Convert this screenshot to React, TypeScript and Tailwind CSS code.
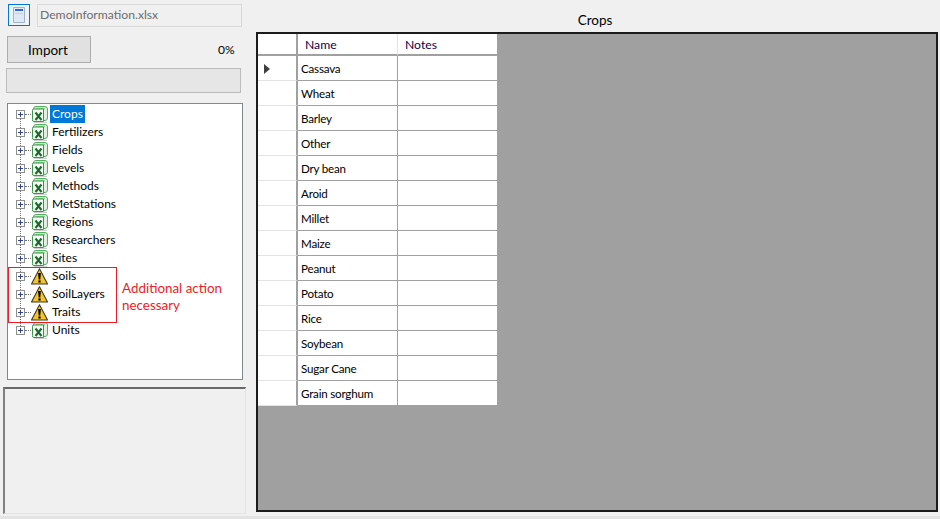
import React from 'react';

const SHEETS = [
  { name: 'Crops', warn: false },
  { name: 'Fertilizers', warn: false },
  { name: 'Fields', warn: false },
  { name: 'Levels', warn: false },
  { name: 'Methods', warn: false },
  { name: 'MetStations', warn: false },
  { name: 'Regions', warn: false },
  { name: 'Researchers', warn: false },
  { name: 'Sites', warn: false },
  { name: 'Soils', warn: true },
  { name: 'SoilLayers', warn: true },
  { name: 'Traits', warn: true },
  { name: 'Units', warn: false },
];

const CROPS = [
  'Cassava', 'Wheat', 'Barley', 'Other', 'Dry bean', 'Aroid', 'Millet',
  'Maize', 'Peanut', 'Potato', 'Rice', 'Soybean', 'Sugar Cane', 'Grain sorghum',
];

function ExcelIcon() {
  return (
    <svg width="17" height="17" viewBox="0 0 17 17" className="shrink-0">
      <rect x="2.5" y="0.5" width="14" height="14" rx="2.5" fill="#dff0df" stroke="#55ad60" />
      <path d="M5 2.5h9" stroke="#8fd096" strokeWidth="1.5" />
      <path d="M1.5 4.5Q1 3 3 3h9.5v12.5H3q-2 0-1.5-2z" fill="#f7fbf7" stroke="#3c9649" />
      <path d="M4.5 6.5l6 7.5M10.5 6.5l-6 7.5" stroke="#1c6a2c" strokeWidth="2.1" />
      <path d="M3 16.5h13" stroke="#cfcfcf" strokeWidth="1" />
    </svg>
  );
}

function WarnIcon() {
  return (
    <svg width="17" height="17" viewBox="0 0 17 17" className="shrink-0">
      <path d="M8.5 0.8L16.5 16H0.5Z" fill="#f4c430" stroke="#3f3714" strokeWidth="1.1" strokeLinejoin="round" />
      <path d="M7.1 5h2.8l-.6 6.4H7.7Z" fill="#000" />
      <rect x="7.4" y="12.4" width="2.2" height="2.2" fill="#000" />
    </svg>
  );
}

function Expander() {
  return (
    <div className="w-[9px] h-[9px] border border-[#8e8f8f] bg-white flex items-center justify-center shrink-0 z-10">
      <svg width="7" height="7" viewBox="0 0 7 7">
        <path d="M1 3.5h5M3.5 1v5" stroke="#33448c" strokeWidth="1" />
      </svg>
    </div>
  );
}

function TreeRow({ name, warn, selected, last }: { name: string; warn: boolean; selected: boolean; last: boolean }) {
  return (
    <div className="relative flex items-center h-[18px] pl-[8px]">
      {/* dotted connector to the next row */}
      {!last && <div className="absolute left-[12px] top-[9px] h-[18px] border-l border-dotted border-[#707070]" />}
      <Expander />
      <div className="w-[6px] border-t border-dotted border-[#707070] shrink-0" />
      {warn ? <WarnIcon /> : <ExcelIcon />}
      <span className={`ml-[2px] px-[2px] w-[fit-content] h-[18px] leading-[18px] ${selected ? 'bg-[#0078d7] text-white' : 'text-black'}`}>
        {name}
      </span>
    </div>
  );
}

function LeftPanel() {
  return (
    <div className="w-[246px] shrink-0 flex flex-col">
      <div className="flex items-start pt-[4px] pl-[8px]">
        <button className="w-[22px] h-[22px] border border-[#0078d7] bg-[#eef3f8] flex items-center justify-center">
          <svg width="14" height="16" viewBox="0 0 14 16">
            <path d="M1.5 0.5h11v15h-11z" fill="#dfe9f5" stroke="#9fb2c9" />
            <rect x="3" y="2" width="8" height="2" fill="#3b66c4" />
            <path d="M3 6.5h8" stroke="#c3d2e4" />
          </svg>
        </button>
        <div className="ml-[7px] w-[205px] h-[23px] border border-[#d9d9d9] bg-[#f0f0f0] text-[#6d6d6d] leading-[20px] pl-[2px] text-[12.2px]">
          DemoInformation.xlsx
        </div>
      </div>
      <div className="flex items-center mt-[9px] pl-[7px]">
        <button className="w-[84px] h-[27px] border border-[#adadad] bg-[#e1e1e1] text-[13.5px] pt-[1px] pr-[2px] text-black">Import</button>
        <span className="ml-[127px] text-[12px] text-black">0%</span>
      </div>
      <div className="ml-[6px] mt-[5px] w-[235px] h-[25px] border border-[#bcbcbc] bg-[#e6e6e6]" />
      <div className="relative ml-[7px] mt-[10px] w-[236px] h-[277px] border border-[#828790] bg-white pt-[1px] text-[12px]">
        {SHEETS.map((s, i) => (
          <TreeRow key={s.name} name={s.name} warn={s.warn} selected={i === 0} last={i === SHEETS.length - 1} />
        ))}
        {/* red callout drawn over the tree */}
        <div className="absolute left-[0px] top-[163px] w-[109px] h-[56px] border border-[#ed1c24]" />
        <div className="absolute left-[114px] top-[176px] text-[#ed1c24] text-[13.4px] leading-[17px]">
          Additional action
          <br />
          necessary
        </div>
      </div>
      <div className="ml-[3px] mt-[7px] w-[243px] h-[127px] border-t-2 border-l-2 border-r border-b border-t-[#696969] border-l-[#808080] border-r-[#e3e3e3] border-b-[#e3e3e3] bg-[#f0f0f0]" />
    </div>
  );
}

function CropsGrid() {
  return (
    <div className="flex-1 ml-[10px] mr-[2px] flex flex-col">
      <div className="h-[32px] flex items-end justify-center pb-[3px] pr-[4px] text-[13.5px] leading-[18px] text-black">Crops</div>
      <div className="h-[480px] border-2 border-[#1c1c1c] bg-[#a0a0a0] text-[11.6px]">
        <div className="flex h-[22px] w-[239px] bg-white text-[12.2px]">
          <div className="w-[40px] border-r-2 border-r-[#a0a0a0] border-b-2 border-b-[#a0a0a0]" />
          <div className="w-[100px] border-r border-r-[#e3e3e3] border-b-2 border-b-[#a0a0a0] pl-[7px] leading-[22px] text-[#10004a]">Name</div>
          <div className="w-[99px] border-b-2 border-b-[#a0a0a0] pl-[7px] leading-[22px] text-[#10004a]">Notes</div>
        </div>
        {CROPS.map((crop, i) => (
          <div key={crop} className="flex h-[25px] w-[239px] bg-white">
            <div className="w-[40px] border-r-2 border-r-[#a0a0a0] border-b border-b-[#e3e3e3] flex items-center pl-[6px] pt-[2px]">
              {i === 0 && (
                <svg width="6" height="10" viewBox="0 0 6 10">
                  <path d="M0 0l6 5-6 5z" fill="#404040" />
                </svg>
              )}
            </div>
            <div className="w-[100px] border-r border-r-[#a0a0a0] border-b border-b-[#a0a0a0] pl-[3px] leading-[26px] tracking-[-0.2px] text-black">{crop}</div>
            <div className="w-[99px] border-b border-b-[#a0a0a0]" />
          </div>
        ))}
      </div>
    </div>
  );
}

export default function App() {
  return (
    <div className="w-[940px] h-[519px] bg-[#f0f0f0] overflow-hidden flex flex-col" style={{ fontFamily: 'Lato, sans-serif' }}>
      <div className="flex h-[516px]">
        <LeftPanel />
        <CropsGrid />
      </div>
      <div className="h-[3px] bg-[#e3e3e3]" />
    </div>
  );
}
